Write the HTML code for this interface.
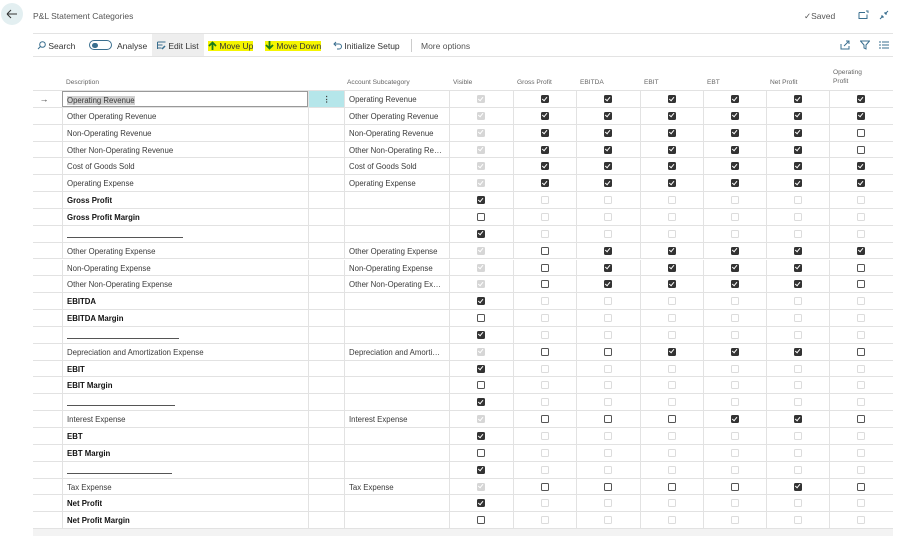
<!DOCTYPE html>
<html><head><meta charset="utf-8"><style>
*{box-sizing:border-box;margin:0;padding:0}
body{width:902px;height:536px;background:#fff;font-family:"Liberation Sans",sans-serif;color:#333;position:relative;overflow:hidden;font-size:8px}
.abs{position:absolute}
.back{left:1px;top:3px;width:22px;height:22px;border-radius:50%;background:#e3eff1}
.title{left:33px;top:11px;font-size:8.5px;color:#555}
.tb{left:33px;width:860px;border-top:1px solid #e3e3e3;border-bottom:1px solid #e3e3e3;top:33px;height:24px}
.ti{position:absolute;top:7px;font-size:8.5px;color:#333;white-space:nowrap}
.hl{background:#f5f500}
.hdr{position:absolute;top:62px;height:29px;font-size:6.6px;color:#666}
.hdr div{position:absolute;bottom:5px}
.row{position:absolute;left:33px;width:860px;height:16.85px;border-bottom:1px solid #e2e2e2}
.c{position:absolute;top:0;height:100%;border-left:1px solid #e2e2e2;font-size:7.8px;line-height:17px;white-space:nowrap;overflow:hidden;padding-left:4px;color:#3a3a3a}
.b{font-weight:bold;color:#111}
.cb{position:absolute;top:4px;width:8px;height:8px;border-radius:1.5px}
.k{background:#333;}
.k:after,.g:after{content:"";position:absolute;left:2.3px;top:0.6px;width:2.2px;height:4.3px;border:solid #fff;border-width:0 1.3px 1.3px 0;transform:rotate(40deg)}
.g{background:#d6d6d6}
.u{border:1px solid #555;background:#fff}
.d{border:1px solid #dcdcdc;background:#fff}
</style></head><body>
<div class="abs back"><svg width="22" height="22" viewBox="0 0 22 22"><path d="M6 11h10M6 11l4-4M6 11l4 4" stroke="#333" stroke-width="1" fill="none"/></svg></div>
<div class="abs title">P&amp;L Statement Categories</div>
<div class="abs" style="left:804px;top:11px;font-size:8.5px;color:#555">✓Saved</div>
<svg class="abs" style="left:858px;top:10px" width="12" height="10"><path d="M1 2.5h6M1 2.5v6h8v-4M8 1h2v2" stroke="#3a6f8f" fill="none"/></svg>
<svg class="abs" style="left:878px;top:9px" width="12" height="12"><path d="M2 10l3-3M5 7v2M5 7h-2M10 2l-3 3M7 5v-2M7 5h2" stroke="#3a6f8f" fill="none"/></svg>
<div class="abs tb">
 <div style="position:absolute;left:119px;top:0;width:52px;height:22px;background:#eeeeee"></div>
 <div class="ti" style="left:4px"><svg width="9" height="9" style="vertical-align:-1px"><circle cx="5.5" cy="3.5" r="2.8" stroke="#3a6f8f" fill="none"/><path d="M3.5 5.5L1 8" stroke="#3a6f8f"/></svg> Search</div>
 <div class="ti" style="left:56px;top:6px;width:23px;height:10px;border:1px solid #3a6f8f;border-radius:5px"><div style="position:absolute;left:2px;top:1.5px;width:6px;height:5px;border-radius:3px;background:#3a6f8f"></div></div>
 <div class="ti" style="left:84px">Analyse</div>
 <div class="ti" style="left:124px"><svg width="9" height="9" style="vertical-align:-1px"><path d="M0.5 1h8M0.5 4h5M0.5 7h4M0.5 1v7" stroke="#3a6f8f" fill="none"/><path d="M5 8l3-3" stroke="#3a6f8f" stroke-width="1.5"/></svg> Edit List</div>
 <div class="ti hl" style="left:175px"><svg width="9" height="9" style="vertical-align:-1px"><path d="M4.5 9V1.5M1 5l3.5-3.5L8 5" stroke="#1a7a1a" stroke-width="1.8" fill="none"/></svg> Move Up</div>
 <div class="ti hl" style="left:232px"><svg width="9" height="9" style="vertical-align:-1px"><path d="M4.5 0v7.5M1 4l3.5 3.5L8 4" stroke="#1a7a1a" stroke-width="1.8" fill="none"/></svg> Move Down</div>
 <div class="ti" style="left:300px"><svg width="9" height="9" style="vertical-align:-1px"><path d="M3 1L1 3l2 2M1 3h5a2.5 2.5 0 010 5H4" stroke="#3a6f8f" fill="none"/></svg> Initialize Setup</div>
 <div style="position:absolute;left:378px;top:5px;width:1px;height:13px;background:#ccc"></div>
 <div class="ti" style="left:388px;color:#555">More options</div>
 <svg style="position:absolute;left:807px;top:6px" width="10" height="10"><path d="M1 4v5h8V6M4 6l5-5M6 1h3v3" stroke="#3a6f8f" fill="none"/></svg>
 <svg style="position:absolute;left:827px;top:6px" width="10" height="10"><path d="M0.5 1h9L6 5v4L4 8V5z" stroke="#3a6f8f" fill="none"/></svg>
 <svg style="position:absolute;left:846px;top:7px" width="10" height="9"><path d="M0 1h2M0 4h2M0 7h2M3 1h7M3 4h7M3 7h7" stroke="#3a6f8f"/></svg>
</div>
<div class="hdr" style="left:33px;width:860px">
 <div style="left:33px">Description</div><div style="left:314px">Account Subcategory</div><div style="left:420px">Visible</div>
 <div style="left:484px">Gross Profit</div><div style="left:547px">EBITDA</div><div style="left:611px">EBIT</div><div style="left:674px">EBT</div><div style="left:737px">Net Profit</div><div style="left:800px;line-height:9px">Operating<br>Profit</div>
</div>
<div class="abs" style="left:33px;top:90px;width:860px;height:1px;background:#e2e2e2"></div>
<div class="abs" style="left:33px;top:529px;width:860px;height:7px;background:#f3f3f3"></div>
<div id="rows"></div>
<script>
var R=[
["Operating Revenue","Operating Revenue","g","kkkkkk",0],
["Other Operating Revenue","Other Operating Revenue","g","kkkkkk",0],
["Non-Operating Revenue","Non-Operating Revenue","g","kkkkku",0],
["Other Non-Operating Revenue","Other Non-Operating Re…","g","kkkkku",0],
["Cost of Goods Sold","Cost of Goods Sold","g","kkkkkk",0],
["Operating Expense","Operating Expense","g","kkkkkk",0],
["Gross Profit","","k","dddddd",1],
["Gross Profit Margin","","u","dddddd",1],
["L116","","k","dddddd",0],
["Other Operating Expense","Other Operating Expense","g","ukkkkk",0],
["Non-Operating Expense","Non-Operating Expense","g","ukkkku",0],
["Other Non-Operating Expense","Other Non-Operating Ex…","g","ukkkku",0],
["EBITDA","","k","dddddd",1],
["EBITDA Margin","","u","dddddd",1],
["L112","","k","dddddd",0],
["Depreciation and Amortization Expense","Depreciation and Amorti…","g","uukkku",0],
["EBIT","","k","dddddd",1],
["EBIT Margin","","u","dddddd",1],
["L108","","k","dddddd",0],
["Interest Expense","Interest Expense","g","uuukku",0],
["EBT","","k","dddddd",1],
["EBT Margin","","u","dddddd",1],
["L105","","k","dddddd",0],
["Tax Expense","Tax Expense","g","uuuuku",0],
["Net Profit","","k","dddddd",1],
["Net Profit Margin","","u","dddddd",1]];
var X=[416,480,543,607,670,733,796],W=[64,63,64,63,63,63,64];
var h="";
R.forEach(function(r,i){
 var top=91+i*16.85;
 h+='<div class="row" style="top:'+top+'px">';
 h+='<div class="c" style="left:0;width:29px;border-left:none;font-size:9px">'+(i==0?'&nbsp;→':'')+'</div>';
 var d=r[0];
 if(d[0]=="L"&&d.length<5){d='<span style="display:inline-block;width:'+d.slice(1)+'px;border-bottom:1px solid #555;height:12px"></span>';}
 var st=i==0?'border:1px solid #999;':'';
 if(i==0)d='<span style="background:#d0d0d0">'+d+'</span>';
 h+='<div class="c'+(r[4]?' b':'')+'" style="left:29px;width:246px;'+st+'">'+d+'</div>';
 h+='<div class="c" style="left:275px;width:36px;'+(i==0?'background:#b5e6ea;text-align:center;padding:0;font-weight:bold':'')+'">'+(i==0?'⋮':'')+'</div>';
 h+='<div class="c" style="left:311px;width:105px">'+r[1]+'</div>';
 var t=r[2]+r[3];
 for(var j=0;j<7;j++){h+='<div class="c" style="left:'+X[j]+'px;width:'+W[j]+'px"><div class="cb '+t[j]+'" style="left:'+(W[j]/2-5)+'px"></div></div>';}
 h+='</div>';
});
document.getElementById("rows").innerHTML=h;
</script>
</body></html>
